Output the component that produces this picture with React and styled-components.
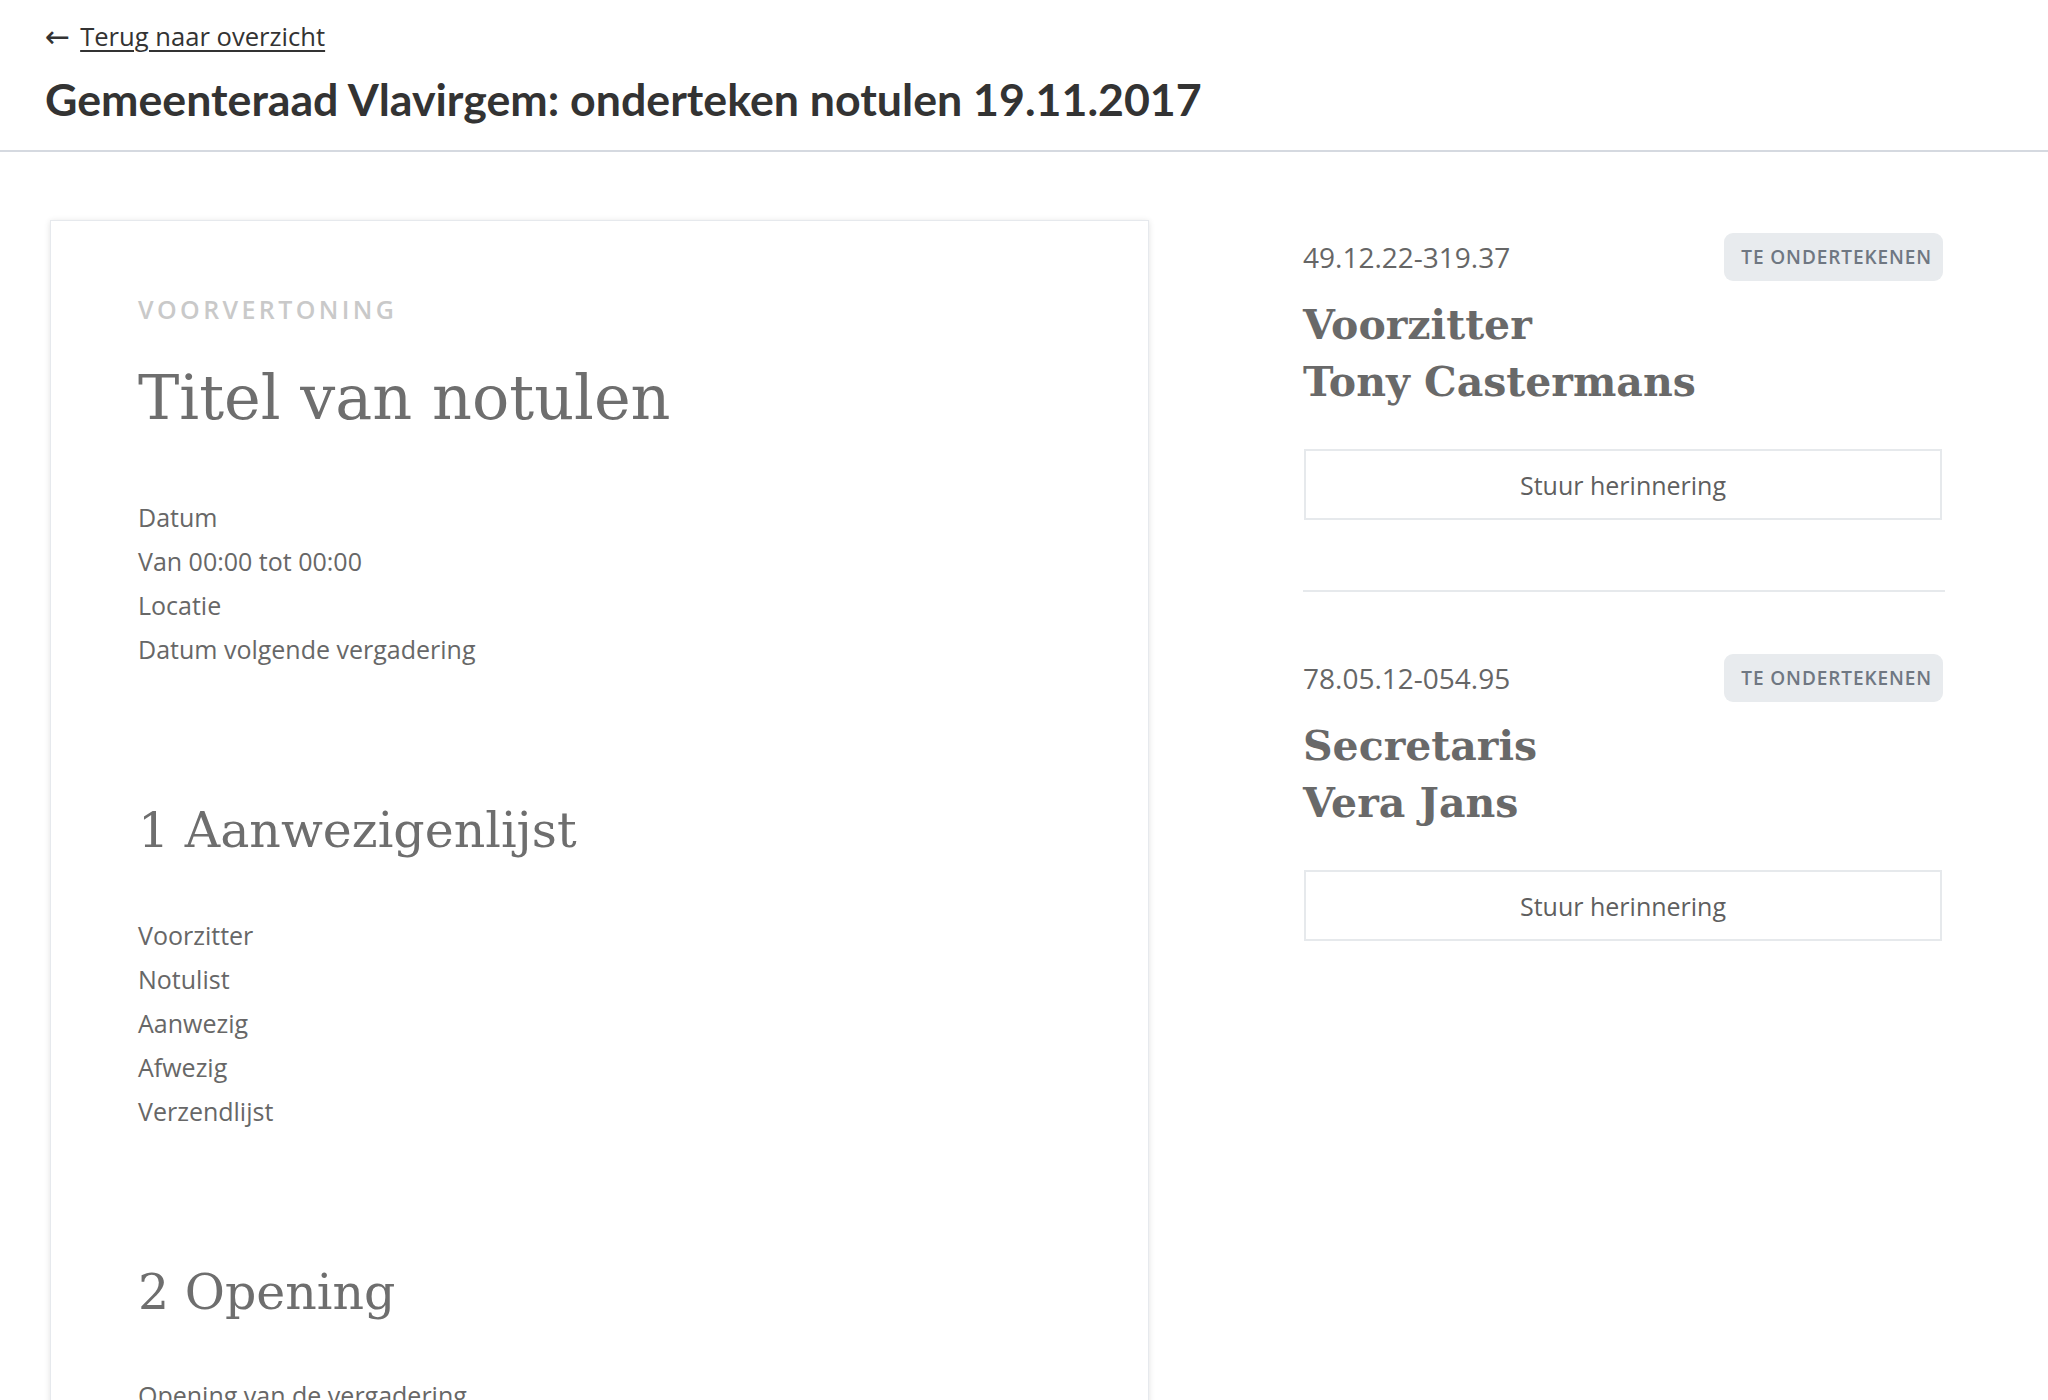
import React from "react";
import styled, { createGlobalStyle } from "styled-components";

const GlobalStyle = createGlobalStyle`
  html, body {
    margin: 0;
    padding: 0;
    background: #ffffff;
  }
  body {
    font-family: "Open Sans", "Liberation Sans", sans-serif;
    color: #666666;
  }
  * { box-sizing: border-box; }
`;

const Header = styled.header`
  padding: 22px 45px 26px;
  border-bottom: 2px solid #d5d9e0;
`;

const BackLink = styled.a`
  display: inline-block;
  font-family: "Open Sans", "Liberation Sans", sans-serif;
  font-size: 25.6px;
  line-height: 30px;
  color: #333333;
  text-decoration: underline;
  text-underline-offset: 4px;
  text-decoration-thickness: 2px;
`;

const Arrow = styled.span`
  display: inline-block;
  font-family: "DejaVu Sans", sans-serif;
  font-size: 30px;
  line-height: 30px;
  margin-right: 10px;
  vertical-align: top;
`;

const PageTitle = styled.h1`
  margin: 22px 0 0;
  font-family: Lato, "Open Sans", sans-serif;
  font-weight: 700;
  font-size: 44.7px;
  line-height: 50px;
  color: #333333;
`;

const Main = styled.main`
  display: flex;
  align-items: flex-start;
  gap: 154px;
  padding: 68px 0 0 50px;
`;

const Card = styled.article`
  width: 1099px;
  flex: none;
  padding: 73px 87px 120px;
  background: #ffffff;
  border: 1px solid #e6e9ed;
  box-shadow: 0 1px 6px rgba(0, 0, 0, 0.12);
  min-height: 1400px;
`;

const Eyebrow = styled.div`
  font-family: "Open Sans", "Liberation Sans", sans-serif;
  font-weight: 600;
  font-size: 25px;
  line-height: 30px;
  letter-spacing: 3.4px;
  color: #c9c9c9;
  text-transform: uppercase;
`;

const DocTitle = styled.h2`
  margin: 37px 0 0;
  font-family: "DejaVu Serif", "Liberation Serif", serif;
  font-weight: 400;
  font-size: 62px;
  line-height: 74px;
  color: #6e6e6e;
`;

const SectionTitle = styled.h3`
  margin: ${(p) => p.$top}px 0 0;
  font-family: "DejaVu Serif", "Liberation Serif", serif;
  font-weight: 400;
  font-size: 49px;
  line-height: 64px;
  color: #6e6e6e;
`;

const InfoList = styled.ul`
  list-style: none;
  margin: ${(p) => p.$top}px 0 0;
  padding: 0;
`;

const InfoItem = styled.li`
  font-family: "Open Sans", "Liberation Sans", sans-serif;
  font-weight: 400;
  font-size: 25px;
  line-height: 44px;
  color: #676767;
`;

const Aside = styled.aside`
  width: 642px;
  flex: none;
  padding-top: 13px;
`;

const SignerBlock = styled.section`
  display: flex;
  flex-direction: column;
`;

const MetaRow = styled.div`
  display: flex;
  align-items: center;
  justify-content: space-between;
  height: 48px;
`;

const NationalId = styled.span`
  font-family: "Open Sans", "Liberation Sans", sans-serif;
  font-weight: 400;
  font-size: 28px;
  line-height: 36px;
  color: #666666;
`;

const Badge = styled.span`
  display: inline-flex;
  align-items: center;
  height: 48px;
  padding: 0 11px 0 17px;
  border-radius: 9px;
  background: #e8ebee;
  font-family: "Open Sans", "Liberation Sans", sans-serif;
  font-weight: 600;
  font-size: 19px;
  letter-spacing: 0.9px;
  color: #6f7782;
  text-transform: uppercase;
  margin-right: 2px;
`;

const SignerName = styled.h4`
  margin: 16px 0 0;
  font-family: "DejaVu Serif", "Liberation Serif", serif;
  font-weight: 700;
  font-size: 41px;
  line-height: 57px;
  color: #696969;
`;

const ReminderButton = styled.button`
  margin: 38px 3px 0 1px;
  height: 71px;
  background: #ffffff;
  border: 2px solid #e6e9ec;
  border-radius: 0;
  font-family: "Open Sans", "Liberation Sans", sans-serif;
  font-weight: 400;
  font-size: 25px;
  color: #5f5f5f;
  cursor: pointer;
`;

const Divider = styled.hr`
  margin: 70px 0 62px;
  border: 0;
  height: 2px;
  background: #e6e9ec;
`;

const signers = [
  { id: "49.12.22-319.37", role: "Voorzitter", name: "Tony Castermans" },
  { id: "78.05.12-054.95", role: "Secretaris", name: "Vera Jans" },
];

export default function App() {
  return (
    <>
      <GlobalStyle />
      <Header>
        <BackLink href="#">
          <Arrow>←</Arrow>Terug naar overzicht
        </BackLink>
        <PageTitle>Gemeenteraad Vlavirgem: onderteken notulen 19.11.2017</PageTitle>
      </Header>
      <Main>
        <Card>
          <Eyebrow>Voorvertoning</Eyebrow>
          <DocTitle>Titel van notulen</DocTitle>
          <InfoList $top={60}>
            <InfoItem>Datum</InfoItem>
            <InfoItem>Van 00:00 tot 00:00</InfoItem>
            <InfoItem>Locatie</InfoItem>
            <InfoItem>Datum volgende vergadering</InfoItem>
          </InfoList>
          <SectionTitle $top={128}>1 Aanwezigenlijst</SectionTitle>
          <InfoList $top={50}>
            <InfoItem>Voorzitter</InfoItem>
            <InfoItem>Notulist</InfoItem>
            <InfoItem>Aanwezig</InfoItem>
            <InfoItem>Afwezig</InfoItem>
            <InfoItem>Verzendlijst</InfoItem>
          </InfoList>
          <SectionTitle $top={128}>2 Opening</SectionTitle>
          <InfoList $top={48}>
            <InfoItem>Opening van de vergadering</InfoItem>
          </InfoList>
        </Card>
        <Aside>
          {signers.map((s, i) => (
            <React.Fragment key={s.id}>
              {i > 0 && <Divider />}
              <SignerBlock>
                <MetaRow>
                  <NationalId>{s.id}</NationalId>
                  <Badge>Te ondertekenen</Badge>
                </MetaRow>
                <SignerName>
                  {s.role}
                  <br />
                  {s.name}
                </SignerName>
                <ReminderButton type="button">Stuur herinnering</ReminderButton>
              </SignerBlock>
            </React.Fragment>
          ))}
        </Aside>
      </Main>
    </>
  );
}
